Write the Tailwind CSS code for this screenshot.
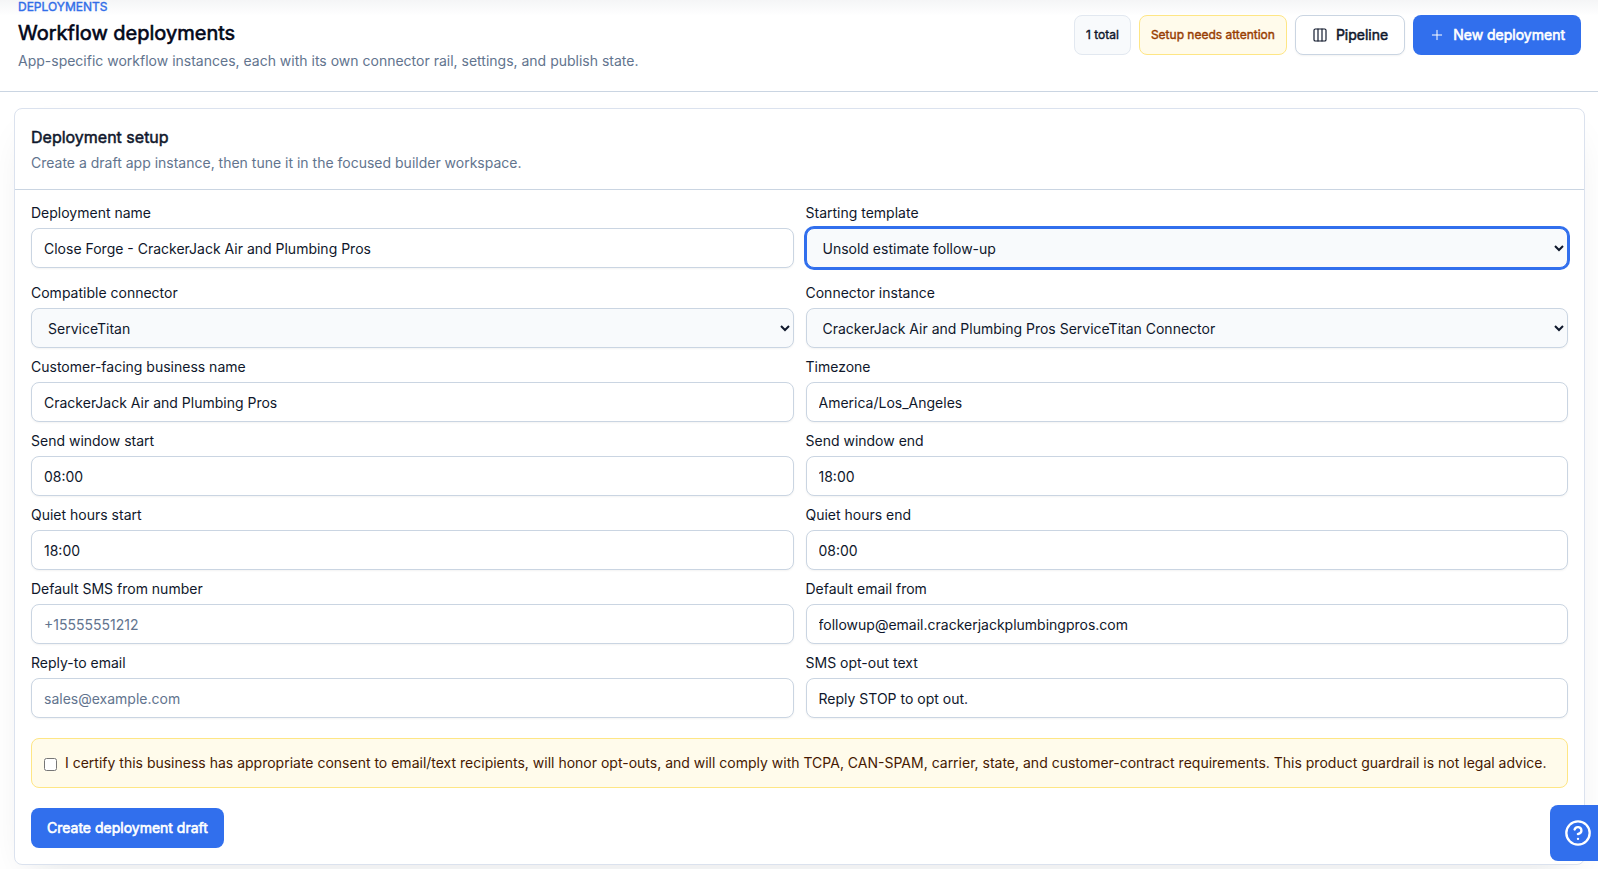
<!DOCTYPE html>
<html lang="en">
<head>
  <meta charset="UTF-8" />
  <meta name="viewport" content="width=device-width, initial-scale=1.0" />
  <title>Workflow deployments</title>
  <script src="https://cdn.jsdelivr.net/npm/@tailwindcss/browser@4"></script>
</head>
<body class="min-h-screen overflow-x-hidden bg-white font-['Inter',sans-serif] text-sm text-slate-900">

  <!-- Page header -->
  <header class="-mt-px flex items-center justify-between gap-4 border-b border-slate-300 pr-[17px] pb-5 pl-[18px]">
    <div>
      <p class="mb-1 text-xs leading-4 uppercase text-[#316fed] [-webkit-text-stroke:0.4px]">Deployments</p>
      <h1 class="text-xl leading-7 text-slate-950 [-webkit-text-stroke:0.6px]">Workflow deployments</h1>
      <p class="mt-1 leading-5 text-slate-500">App-specific workflow instances, each with its own connector rail, settings, and publish state.</p>
    </div>
    <div class="flex shrink-0 gap-2">
      <span class="flex h-10 items-center rounded-lg border border-slate-200 bg-slate-50 px-[11px] text-xs [-webkit-text-stroke:0.4px]">1 total</span>
      <span class="flex h-10 items-center rounded-lg border border-amber-200 bg-amber-50 px-[11px] text-xs text-amber-800 [-webkit-text-stroke:0.4px]">Setup needs attention</span>
      <a href="#pipeline" class="flex h-10 items-center gap-2 rounded-lg border border-slate-300 bg-white px-4 shadow-xs [-webkit-text-stroke:0.5px]">
        <svg class="size-4" viewBox="0 0 24 24" fill="none" stroke="currentColor" stroke-width="1.75" stroke-linecap="round" stroke-linejoin="round"><rect width="18" height="18" x="3" y="3" rx="2" /><path d="M9 3v18" /><path d="M15 3v18" /></svg>
        Pipeline
      </a>
      <button type="button" class="flex h-10 items-center gap-2 rounded-lg bg-[#316fed] px-4 text-white [-webkit-text-stroke:0.6px]">
        <svg class="size-4" viewBox="0 0 24 24" fill="none" stroke="currentColor" stroke-width="1.5" stroke-linecap="round" stroke-linejoin="round"><path d="M5 12h14" /><path d="M12 5v14" /></svg>
        New deployment
      </button>
    </div>
  </header>
  <div class="pointer-events-none absolute inset-x-0 top-0 h-4 bg-linear-to-b from-slate-700/5 to-transparent"></div>

  <!-- Deployment setup -->
  <main class="pt-4 pr-[13px] pl-[14px]">
    <section class="rounded-lg border border-[#dbe2ee] bg-white shadow-[0_18px_40px_-16px_rgba(15,23,42,0.12)]">
      <div class="border-b border-slate-300 p-4">
        <h2 class="text-base leading-6 [-webkit-text-stroke:0.5px]">Deployment setup</h2>
        <p class="mt-1 leading-5 text-slate-500">Create a draft app instance, then tune it in the focused builder workspace.</p>
      </div>

      <form class="space-y-5 p-4">
        <div class="grid grid-cols-2 gap-3">
          <div class="mb-1.5 space-y-2">
            <label for="name" class="block leading-none">Deployment name</label>
            <input id="name" type="text" value="Close Forge - CrackerJack Air and Plumbing Pros" class="block h-10 w-full rounded-lg border border-slate-300 bg-white px-3 shadow-xs outline-none" />
          </div>
          <div class="mb-1.5 space-y-2">
            <label for="template" class="block leading-none">Starting template</label>
            <select id="template" class="block h-10 w-full rounded-lg border border-[#316fed] bg-slate-50 px-3 ring-2 ring-[#316fed] outline-none">
              <option>Unsold estimate follow-up</option>
            </select>
          </div>

          <div class="space-y-2">
            <label for="connector" class="block leading-none">Compatible connector</label>
            <select id="connector" class="block h-10 w-full rounded-lg border border-slate-300 bg-slate-50 px-3 shadow-xs outline-none">
              <option>ServiceTitan</option>
            </select>
          </div>
          <div class="space-y-2">
            <label for="instance" class="block leading-none">Connector instance</label>
            <select id="instance" class="block h-10 w-full rounded-lg border border-slate-300 bg-slate-50 px-3 shadow-xs outline-none">
              <option>CrackerJack Air and Plumbing Pros ServiceTitan Connector</option>
            </select>
          </div>

          <div class="space-y-2">
            <label for="business" class="block leading-none">Customer-facing business name</label>
            <input id="business" type="text" value="CrackerJack Air and Plumbing Pros" class="block h-10 w-full rounded-lg border border-slate-300 bg-white px-3 shadow-xs outline-none" />
          </div>
          <div class="space-y-2">
            <label for="timezone" class="block leading-none">Timezone</label>
            <input id="timezone" type="text" value="America/Los_Angeles" class="block h-10 w-full rounded-lg border border-slate-300 bg-white px-3 shadow-xs outline-none" />
          </div>

          <div class="space-y-2">
            <label for="send-start" class="block leading-none">Send window start</label>
            <input id="send-start" type="text" value="08:00" class="block h-10 w-full rounded-lg border border-slate-300 bg-white px-3 shadow-xs outline-none" />
          </div>
          <div class="space-y-2">
            <label for="send-end" class="block leading-none">Send window end</label>
            <input id="send-end" type="text" value="18:00" class="block h-10 w-full rounded-lg border border-slate-300 bg-white px-3 shadow-xs outline-none" />
          </div>

          <div class="space-y-2">
            <label for="quiet-start" class="block leading-none">Quiet hours start</label>
            <input id="quiet-start" type="text" value="18:00" class="block h-10 w-full rounded-lg border border-slate-300 bg-white px-3 shadow-xs outline-none" />
          </div>
          <div class="space-y-2">
            <label for="quiet-end" class="block leading-none">Quiet hours end</label>
            <input id="quiet-end" type="text" value="08:00" class="block h-10 w-full rounded-lg border border-slate-300 bg-white px-3 shadow-xs outline-none" />
          </div>

          <div class="space-y-2">
            <label for="sms-from" class="block leading-none">Default SMS from number</label>
            <input id="sms-from" type="tel" placeholder="+15555551212" class="block h-10 w-full rounded-lg border border-slate-300 bg-white px-3 shadow-xs outline-none placeholder:text-slate-500" />
          </div>
          <div class="space-y-2">
            <label for="email-from" class="block leading-none">Default email from</label>
            <input id="email-from" type="email" value="followup@email.crackerjackplumbingpros.com" class="block h-10 w-full rounded-lg border border-slate-300 bg-white px-3 shadow-xs outline-none" />
          </div>

          <div class="space-y-2">
            <label for="reply-to" class="block leading-none">Reply-to email</label>
            <input id="reply-to" type="email" placeholder="sales@example.com" class="block h-10 w-full rounded-lg border border-slate-300 bg-white px-3 shadow-xs outline-none placeholder:text-slate-500" />
          </div>
          <div class="space-y-2">
            <label for="opt-out" class="block leading-none">SMS opt-out text</label>
            <input id="opt-out" type="text" value="Reply STOP to opt out." class="block h-10 w-full rounded-lg border border-slate-300 bg-white px-3 shadow-xs outline-none" />
          </div>
        </div>

        <label class="flex items-start gap-2 rounded-lg border border-amber-200 bg-amber-50 p-3 leading-6 text-amber-950">
          <input type="checkbox" class="mt-[7px] size-[13px] shrink-0" />
          <span>I certify this business has appropriate consent to email/text recipients, will honor opt-outs, and will comply with TCPA, CAN-SPAM, carrier, state, and customer-contract requirements. This product guardrail is not legal advice.</span>
        </label>

        <button type="submit" class="flex h-10 items-center rounded-lg bg-[#316fed] px-4 text-white [-webkit-text-stroke:0.6px]">Create deployment draft</button>
      </form>
    </section>
  </main>

  <!-- Help -->
  <button type="button" aria-label="Help" class="fixed right-0 bottom-2 flex h-14 items-center rounded-l-lg bg-[#316fed] pr-1.5 pl-3.5 text-white">
    <svg class="size-7" viewBox="0 0 24 24" fill="none" stroke="currentColor" stroke-width="2" stroke-linecap="round" stroke-linejoin="round"><circle cx="12" cy="12" r="10" /><path d="M9.09 9a3 3 0 0 1 5.83 1c0 2-3 3-3 3" /><path d="M12 17h.01" /></svg>
  </button>

</body>
</html>
